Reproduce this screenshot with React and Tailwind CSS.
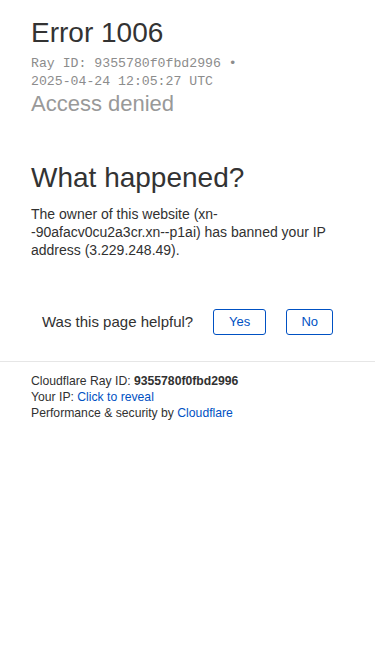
export default function App() {
  const sans = { fontFamily: '"Liberation Sans", Arial, sans-serif' };
  return (
    <div className="min-h-[667px] bg-white text-[#313131]" style={sans}>
      <div className="px-[31px] pt-[17px]">
        <h1 className="text-[28px] leading-[32px] text-[#333]">Error 1006</h1>
        <div
          className="mt-[6px] text-[13.2px] leading-[18px] text-[#8c8c8c] whitespace-nowrap"
          style={{ fontFamily: '"Liberation Mono", "Courier New", monospace' }}
        >
          Ray ID: 9355780f0fbd2996 •
          <br />
          2025-04-24 12:05:27 UTC
        </div>
        <h2 className="mt-[1px] text-[22px] leading-[24px] text-[#999]">Access denied</h2>
        <h2 className="mt-[46px] text-[28px] leading-[32px] text-[#333]">What happened?</h2>
        <p className="mt-[11px] text-[14px] leading-[18px] text-[#313131] whitespace-nowrap">
          The owner of this website (xn-
          <br />
          -90afacv0cu2a3cr.xn--p1ai) has banned your IP
          <br />
          address (3.229.248.49).
        </p>
        <div className="mt-[50px] flex items-center pl-[11px] h-[26px]">
          <span className="text-[15px] leading-[18px] text-[#313131]">Was this page helpful?</span>
          <button className="ml-[20px] h-[26px] w-[53px] rounded-[3px] border border-[#0051c3] text-[13px] text-[#0051c3] bg-white">
            Yes
          </button>
          <button className="ml-[20px] h-[26px] w-[47px] rounded-[3px] border border-[#0051c3] text-[13px] text-[#0051c3] bg-white">
            No
          </button>
        </div>
      </div>
      <div className="mt-[26px] border-t border-[#e6e6e6] px-[31px] pt-[11px] text-[12.2px] leading-[16px] text-[#313131]">
        <div>
          Cloudflare Ray ID: <span className="font-bold">9355780f0fbd2996</span>
        </div>
        <div>
          Your IP: <span className="text-[#0051c3]">Click to reveal</span>
        </div>
        <div>
          Performance &amp; security by <span className="text-[#0051c3]">Cloudflare</span>
        </div>
      </div>
    </div>
  );
}
